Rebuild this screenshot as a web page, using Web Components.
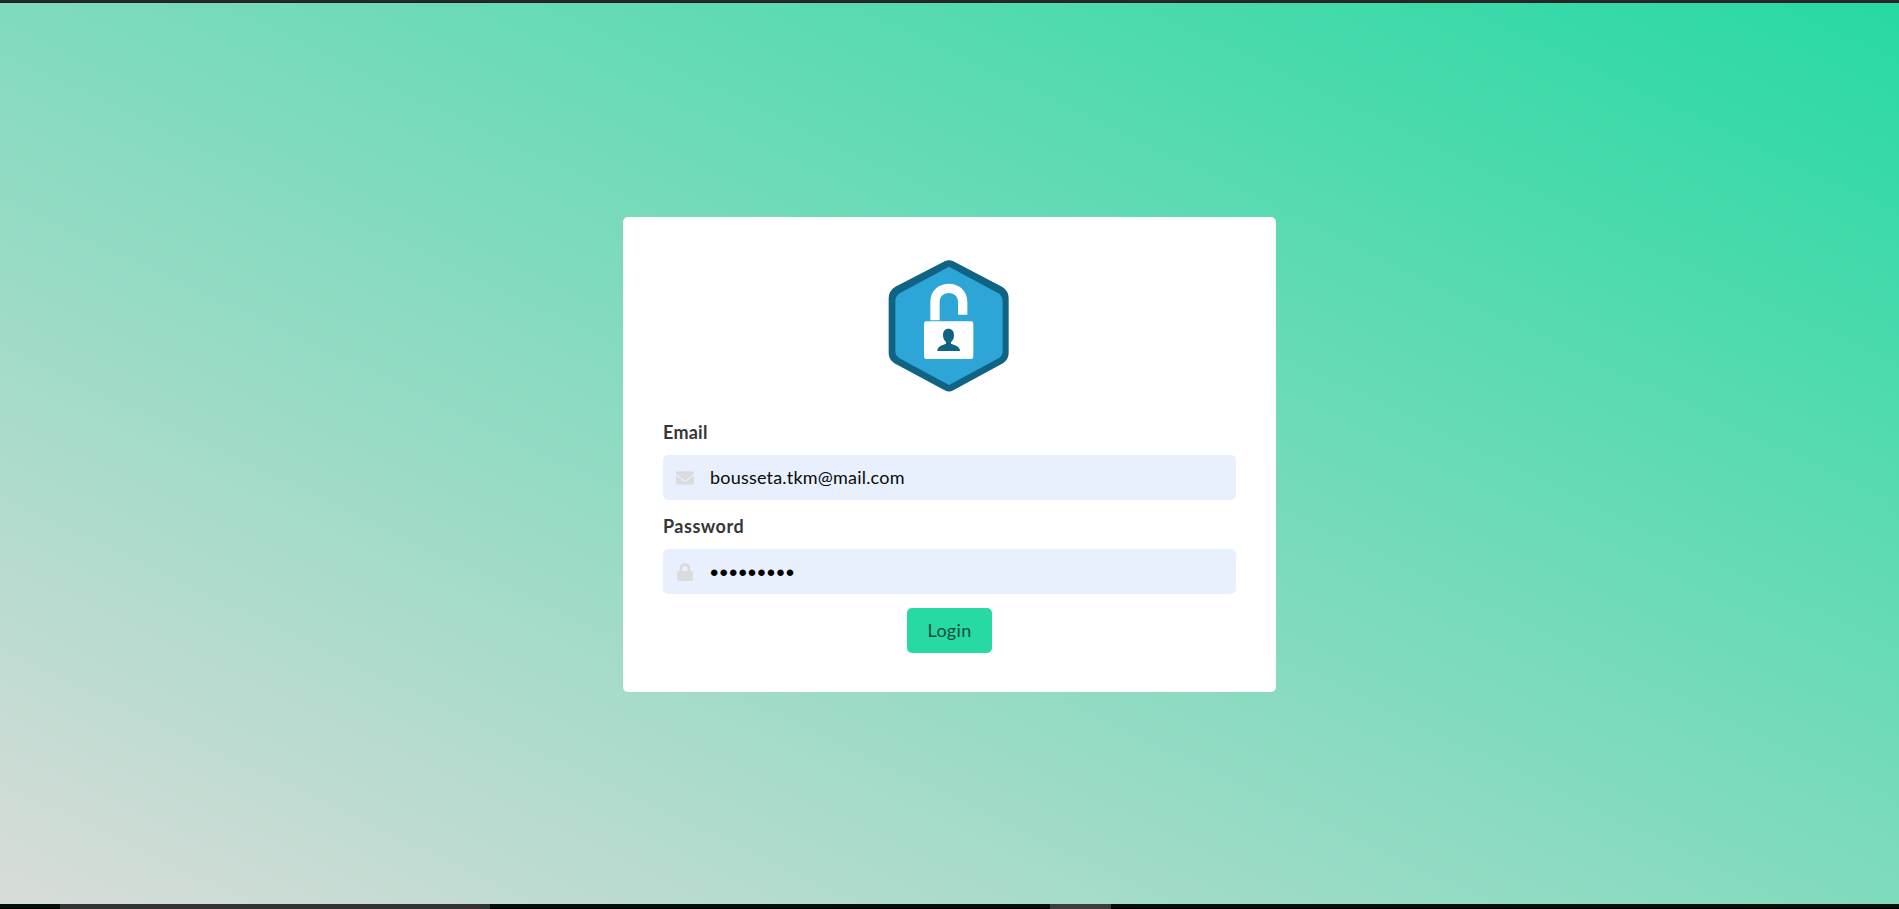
<!DOCTYPE html>
<html lang="en">
<head>
<meta charset="utf-8">
<title>Login</title>
<style>
html,body{margin:0;height:100%;overflow:hidden}
body{font:18px/27px Lato,"Noto Sans",sans-serif;color:#363636}
</style>
</head>
<body>
<login-page>
  <login-card>
    <lock-logo></lock-logo>
    <login-field label="Email" icon="mail" style="--label-spacing:.25px"><span>bousseta.tkm@mail.com</span></login-field>
    <login-field label="Password" icon="lock" style="--label-spacing:.5px;--gap:14px"><span class="dots">•••••••••</span></login-field>
    <login-button>Login</login-button>
  </login-card>
</login-page>
<script>
const define = (name, html, setup) => customElements.define(name, class extends HTMLElement {
  constructor() {
    super();
    this.attachShadow({mode: 'open'}).innerHTML = html;
  }
  connectedCallback() { if (setup) setup(this, this.shadowRoot); }
});

define('login-page', `<style>
:host{display:grid;grid-template-rows:3px 1fr 5px;height:100vh;min-height:909px}
.top{background:linear-gradient(#292b2b,#242424 66%,#1c1f1e)}
main{display:flex;justify-content:center;align-items:flex-start;padding-top:214px;box-sizing:border-box;background:linear-gradient(to top right,#d9dcd9,#27d9a3)}
.bottom{display:grid;grid-template-columns:60px 430px 560px 61px 1fr;background:linear-gradient(#05100b 80%,#000 80%)}
.tab{grid-column:2;background:#333}
.tab2{grid-column:4;background:#3c3c3c}
</style><div class="top"></div><main><slot></slot></main><div class="bottom"><div class="tab"></div><div class="tab2"></div></div>`);

define('login-card', `<style>
:host{display:flex;flex-direction:column;align-items:center;box-sizing:border-box;width:653px;height:475px;padding:40px 40px 39px;background:#fff;border-radius:5px}
</style><slot></slot>`);

define('lock-logo', `<style>:host{display:block;height:162px;flex:none}svg{display:block;width:127px;height:137px}</style>
<svg viewBox="48 36 381 411">
<path d="M224 49Q237 42 250 49L396 125Q416 137 416 160V325Q416 343 399 355L250 436Q237 443 224 436L73 355Q56 343 56 325V160Q56 137 76 125Z" fill="#116384"/>
<path d="M237 65L385 145Q398 153 398 170V318Q398 331 387 339L237 420L87 339Q76 331 76 318V170Q76 153 89 145Z" fill="#2da5d6"/>
<path d="M181 226V171C181 98 292 98 292 171V209H264V171C264 135 209 135 209 171V226Z" fill="#fff"/>
<rect x="162" y="229" width="148" height="113" rx="7" fill="#fff"/>
<path d="M235 251C225 251 219 259 219 270C219 280 223 287 228 291V296C219 300 202 302 202 318H270C270 302 252 300 243 296V291C249 287 252 280 252 270C252 259 246 251 235 251Z" fill="#116384"/>
</svg>`);

define('login-field', `<style>
:host{display:block;width:573px;margin-bottom:var(--gap,13px);flex:none}
label{display:block;font-weight:700;color:#363636;margin-bottom:9px;letter-spacing:var(--label-spacing,0)}
.control{display:flex;height:45px;align-items:center;background:#e8f0fe;border-radius:5px}
.icon{width:44px;display:flex;justify-content:center;margin-right:3px}
svg{width:18px;height:18px;display:block;fill:#dbdbdb}
::slotted(span){color:#0a0a0a;letter-spacing:.2px;white-space:pre}
::slotted(.dots){font-family:"Liberation Sans",sans-serif;font-size:24px;letter-spacing:1.06px;color:#000;padding-top:2px}
</style><label></label><div class="control"><div class="icon"></div><slot></slot></div>`, (el, root) => {
  root.querySelector('label').textContent = el.getAttribute('label');
  root.querySelector('.icon').innerHTML = el.getAttribute('icon') === 'mail'
    ? '<svg viewBox="0 0 512 512"><path d="M502.300 190.800c3.900-3.100 9.700-.2 9.700 4.700V400c0 26.500-21.500 48-48 48H48c-26.500 0-48-21.500-48-48V195.600c0-5 5.700-7.800 9.700-4.700 22.400 17.400 52.100 39.500 154.100 113.600 21.100 15.400 56.700 47.800 92.200 47.600 35.700.3 72-32.800 92.300-47.600 102-74.100 131.600-96.300 154-113.700zM256 320c23.200.4 56.600-29.200 73.400-41.400 132.700-96.300 142.800-104.700 173.400-128.700 5.800-4.500 9.200-11.500 9.200-18.900v-19c0-26.500-21.500-48-48-48H48c-26.500 0-48 21.500-48 48v19c0 7.400 3.400 14.300 9.200 18.900 30.600 23.900 40.700 32.400 173.400 128.700 16.800 12.200 50.200 41.800 73.400 41.400z"/></svg>'
    : '<svg viewBox="0 0 448 512"><path d="M400 224h-24v-72C376 68.200 307.800 0 224 0S72 68.200 72 152v72H48c-26.500 0-48 21.500-48 48v192c0 26.500 21.500 48 48 48h352c26.500 0 48-21.500 48-48V272c0-26.500-21.500-48-48-48zm-104 0H152v-72c0-39.700 32.300-72 72-72s72 32.300 72 72v72z"/></svg>';
});

define('login-button', `<style>
:host{display:block;flex:none}
button{display:block;box-sizing:border-box;width:85px;height:45px;padding:0;border:0;border-radius:5px;background:#27d9a3;color:#124e3c;font:inherit;letter-spacing:.3px}
</style><button><slot></slot></button>`);
</script>
</body>
</html>
